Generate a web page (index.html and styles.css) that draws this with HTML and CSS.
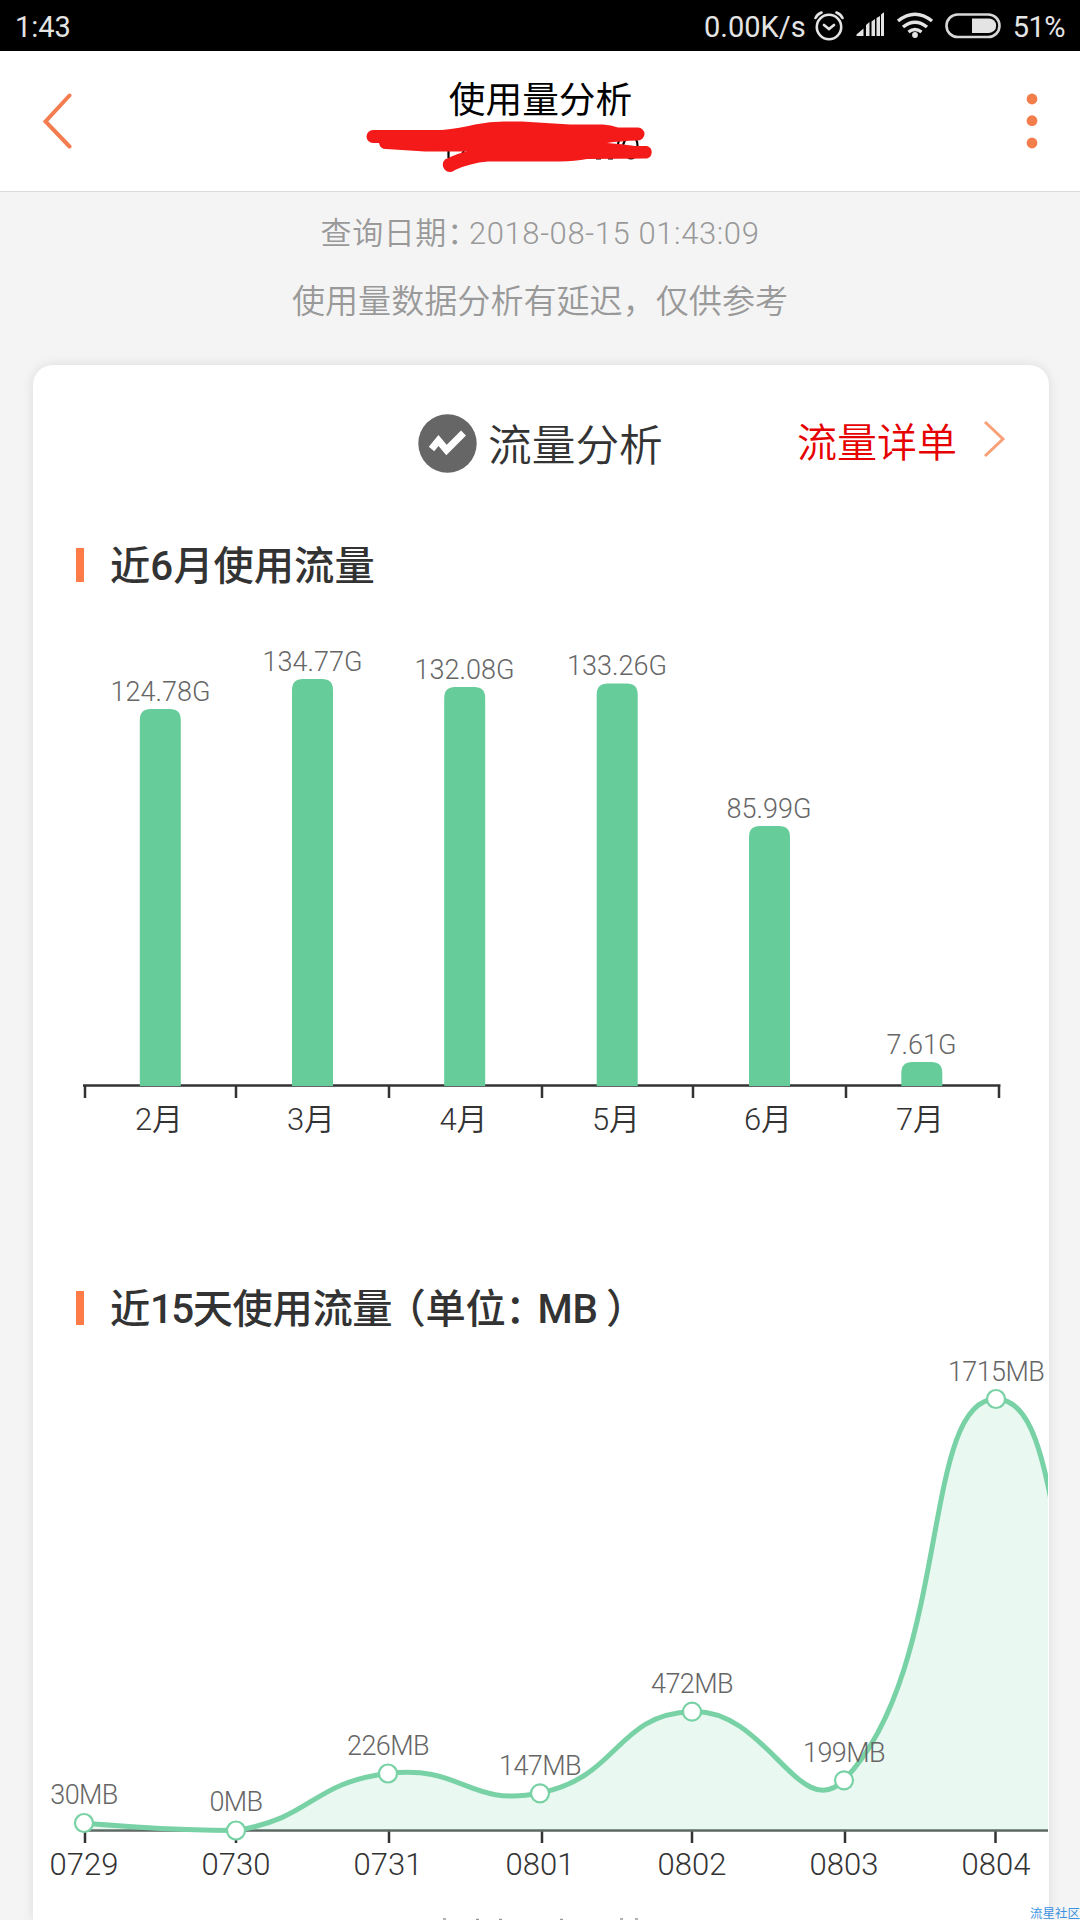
FILE: index.html
```html
<!DOCTYPE html>
<html lang="zh-CN">
<head>
  <meta charset="UTF-8" />
  <meta name="viewport" content="width=device-width, initial-scale=1.0"/>
  <title>使用量分析</title>
  <link rel="stylesheet" href="styles.css">
</head>
<body>

<div class="status-bar">
  <span class="clock">1:43</span>
  <span class="speed">0.00K/s</span>
  <svg class="status-icons" width="190" height="51" viewBox="814 0 190 51">
    <!-- alarm -->
    <g fill="none" stroke="#e4e4e4" stroke-width="2.6" stroke-linecap="round">
      <circle cx="829" cy="27" r="12.2"/>
      <path d="M824 25l5 4 5-4M815.5 18q2-4 6-5.500M842.500 18q-2-4-6-5.500"/>
    </g>
    <!-- signal -->
    <path fill="#e4e4e4" d="M856.500 36v-1.500l7-6V36zM866 36V25l3.500-3v14zM871.500 36V21.500l3.500-2.500v17zM876.500 36V18l3.500-2v20zM881 36V14.500l2.500-2h.5V36z"/>
    <!-- wifi -->
    <g fill="none" stroke="#e4e4e4" stroke-width="3.400">
      <path d="M898 21q17-13.500 34 0M903 27q12-9.500 24 0M908.500 32q6.500-5 13 0"/>
    </g>
    <circle cx="915" cy="35" r="2.900" fill="#e4e4e4"/>
    <!-- battery -->
    <rect x="946.500" y="14.500" width="53" height="22.500" rx="11.200" fill="none" stroke="#d8d8d8" stroke-width="2.600"/>
    <path fill="#e4e4e4" d="M972 18.500h17a7.200 7.200 0 0 1 0 14.400h-17z"/>
  </svg>
  <span class="percent">51%</span>
</div>

<div class="header">
  <svg class="back" width="30" height="58" viewBox="43 92 30 58">
    <path d="M69.500 95.500L45.500 121.500 69.500 146.500" fill="none" stroke="#f47d50" stroke-width="4" stroke-linecap="round"/>
  </svg>
  <h1>使用量分析</h1>
  <svg class="more" width="12" height="60" viewBox="1025.500 91 12 60">
    <g fill="#f47d4c">
      <circle cx="1031.500" cy="99" r="5.400"/>
      <circle cx="1031.500" cy="120.700" r="5.400"/>
      <circle cx="1031.500" cy="143" r="5.400"/>
    </g>
  </svg>
  <svg class="scribble" width="300" height="65" viewBox="360 110 300 65">
    <path d="M448.500 149v9M464 151l-2 3M619 140l-1 4M625 140l-2 5M636 139q1.500 3 1.500 7M596 158.500h5M608 158.500h5M628 158q4 1 6-.5" fill="none" stroke="#000" stroke-width="2.200"/>
    <path fill="#f41a1a" d="M373 130L442 130Q460 128 475 124.500 490 121.500 504 121.500H522L570 124.500H603Q611 125 618 127.500H638A6.500 6.500 0 0 1 638 140.500Q620 141 607 143Q622 144 635 146H647A6.500 6.500 0 0 1 647 158.500L587 159Q575 161 560 161.500H488Q470 163 455 170A6.800 6.800 0 0 1 445 159.500Q458 153 467 151.500L425 151.500 386 149Q380 149 379 143H373A6.500 6.500 0 0 1 373 130Z"/>
  </svg>
</div>

<div class="tips">
  <p class="date">查询日期<span class="colon">：</span>2018-08-15 01:43:09</p>
  <p class="note">使用量数据分析有延迟，仅供参考</p>
</div>

<div class="card">
  <div class="card-head">
    <svg width="59" height="59" viewBox="418 413.500 59 59">
      <circle cx="447.500" cy="443" r="29.200" fill="#666"/>
      <path d="M431.500 448.500l7-8.500 8 9.500 17-17" fill="none" stroke="#fff" stroke-width="7"/>
    </svg>
    <span class="card-title">流量分析</span>
    <a class="detail">流量详单</a>
    <svg class="arrow" width="24" height="40" viewBox="982 419 24 40">
      <path d="M985 422l18 17-18 17" fill="none" stroke="#f8a078" stroke-width="3"/>
    </svg>
  </div>

  <h2><span class="label">近6月使用流量</span></h2>

  <svg class="month-chart" width="1015" height="560" viewBox="33 600 1015 560">
    <path class="axis" d="M83 1085.500H1000.500M85 1085.500V1098M236 1085.500V1098M389 1085.500V1098M542 1085.500V1098M693 1085.500V1098M846 1085.500V1098M999 1085.500V1098"/>
    <g class="bars">
      <path d="M139.800 1086V720q0-11 11-11h19q11 0 11 11v366z"/>
      <path d="M292 1086V690q0-11 11-11h19q11 0 11 11v396z"/>
      <path d="M444.200 1086V698q0-11 11-11h19q11 0 11 11v388z"/>
      <path d="M596.700 1086V694.500q0-11 11-11h19q11 0 11 11v391.500z"/>
      <path d="M749 1086V837q0-11 11-11h19q11 0 11 11v249z"/>
      <path d="M901.300 1086V1073q0-11 11-11h19q11 0 11 11v13z"/>
    </g>
    <g class="value">
      <text x="160.500" y="701">124.78G</text>
      <text x="312.500" y="671">134.77G</text>
      <text x="464.500" y="679">132.08G</text>
      <text x="617" y="675">133.26G</text>
      <text x="769" y="818">85.99G</text>
      <text x="921.500" y="1054">7.61G</text>
    </g>
    <g class="name">
      <text x="159" y="1130">2月</text>
      <text x="311" y="1130">3月</text>
      <text x="463.500" y="1130">4月</text>
      <text x="616" y="1130">5月</text>
      <text x="768" y="1130">6月</text>
      <text x="920" y="1130">7月</text>
    </g>
  </svg>

  <h2><span class="label long">近<span class="days">15</span>天使用流<span class="tight">量</span>（单位<span class="unit">：</span>M<span class="loose">B</span>）</span></h2>

  <svg class="day-chart" width="1015" height="509" viewBox="33 1340 1015 509">
    <path class="axis base" d="M83 1830.500H1048"/>
    <path class="axis" d="M85 1831.500V1843M236 1831.500V1843M389 1831.500V1843M542 1831.500V1843M692 1831.500V1843M845 1831.500V1843M995.500 1831.500V1843"/>
    <path class="area" d="M84 1823C84 1823 162.400 1830.500 236 1830.500C314.400 1817.700 309.900 1783.100 388 1773.500C461.900 1764.400 468.600 1807.600 540 1793C620.600 1776.600 614.800 1714.800 692 1711.500C766.800 1708.300 800 1825 844 1780C952 1669 920 1399 996 1399C1072 1399 1040 1669 1148 1780V1830.500H84Z"/>
    <path class="line" d="M84 1823C84 1823 162.400 1830.500 236 1830.500C314.400 1817.700 309.900 1783.100 388 1773.500C461.900 1764.400 468.600 1807.600 540 1793C620.600 1776.600 614.800 1714.800 692 1711.500C766.800 1708.300 800 1825 844 1780C952 1669 920 1399 996 1399C1072 1399 1040 1669 1148 1780"/>
    <g class="dots">
      <circle cx="84" cy="1823" r="9"/>
      <circle cx="236" cy="1830.500" r="9"/>
      <circle cx="388" cy="1773.500" r="9"/>
      <circle cx="540" cy="1793.300" r="9"/>
      <circle cx="692" cy="1711.700" r="9"/>
      <circle cx="844" cy="1780.300" r="9"/>
      <circle cx="996" cy="1399" r="9"/>
    </g>
    <g class="value mb">
      <text x="84" y="1804">30MB</text>
      <text x="236" y="1811">0MB</text>
      <text x="388" y="1755">226MB</text>
      <text x="540" y="1775">147MB</text>
      <text x="692" y="1693">472MB</text>
      <text x="844" y="1762">199MB</text>
      <text x="996" y="1381">1715MB</text>
    </g>
  </svg>
  <div class="days-axis">
    <span>0729</span>
    <span>0730</span>
    <span>0731</span>
    <span>0801</span>
    <span>0802</span>
    <span>0803</span>
    <span>0804</span>
  </div>
  <!-- tops of the next line, cut by the screen edge -->
  <svg width="1015" height="3" viewBox="33 1917 1015 3">
    <path d="M443 1919h3M476 1919.500h3M499 1919.500h3M560 1919.500h3M620 1919h3M635 1919h3" stroke="#999" stroke-width="1.500"/>
  </svg>
</div>

<div class="watermark">流星社区</div>

</body>
</html>
```
FILE: styles.css
```css
* {
  box-sizing: border-box;
}

body {
  margin: 0;
  position: relative;
  width: 1080px;
  height: 1920px;
  overflow: hidden;
  background: #f4f4f4;
  font-family: Roboto, "Noto Sans CJK SC", sans-serif;
  font-weight: 350;
  color: #333;
}

h1, h2, p {
  margin: 0;
}

svg {
  display: block;
}

/* 状态栏 */
.status-bar {
  height: 51px;
  background: #000;
  color: #e4e4e4;
  display: flex;
  align-items: center;
  padding: 2px 15px 0 15px;
  font-size: 29px;
  font-weight: 400;
}

.status-icons {
  margin: -2px 9px 0 8px;
}

.speed {
  margin-left: auto;
}

.percent {
  letter-spacing: -0.5px;
}

/* 标题栏 */
.header {
  position: relative;
  height: 141px;
  padding: 0 42px 0 43px;
  background: #fff;
  border-bottom: 1px solid #dcdcdc;
  display: grid;
  grid-template-columns: 30px 1fr 30px;
  align-items: center;
}

.more {
  justify-self: end;
}

h1 {
  font-size: 36.7px;
  line-height: 48px;
  font-weight: 400;
  text-align: center;
  color: #000;
  margin-bottom: 41px;
}

.scribble {
  position: absolute;
  left: 360px;
  top: 59px;
}

/* 查询提示 */
.tips {
  height: 173px;
  padding-top: 18px;
  text-align: center;
  color: #999;
}

.date {
  font-size: 31px;
  line-height: 48px;
  letter-spacing: 0.6px;
}

.date .colon {
  letter-spacing: -9px;
}

.note {
  font-size: 33.1px;
  line-height: 50px;
  margin-top: 19px;
}

.card {
  width: 1016px;
  height: 1555px;
  margin-left: 33px;
  background: #fff;
  border-radius: 20px 20px 0 0;
  box-shadow: 0 0 12px rgba(0,0,0,0.1);
  overflow: hidden;
}

.card-head {
  height: 156px;
  display: flex;
  align-items: center;
  padding-left: 385px;
}

.card-title {
  font-size: 43.7px;
  margin-left: 11px;
  margin-bottom: 2px;
}

.detail {
  font-size: 40px;
  color: #e60000;
  margin-left: auto;
  margin-bottom: 6px;
}

.arrow {
  margin: 0 43px 8px 25px;
}

h2 {
  display: flex;
  align-items: center;
  height: 60px;
  padding-left: 43px;
  font-size: 40.3px;
  font-weight: 500;
}

h2::before {
  content: "";
  width: 8px;
  height: 34px;
  margin-right: 26px;
  background: #ff7b47;
}

.label {
  margin-bottom: 6px;
  white-space: nowrap;
}

.long {
  letter-spacing: -0.4px;
}

.days {
  letter-spacing: -1.5px;
}

.tight {
  letter-spacing: -7px;
}

.unit {
  letter-spacing: -8px;
}

.loose {
  letter-spacing: 8px;
}

.card-head + h2 {
  margin-top: 14px;
}

.month-chart {
  margin-top: 5px;
}

.month-chart + h2 {
  margin-top: 118px;
}

.day-chart {
  margin-top: 2px;
}

/* 图表 */
.axis {
  fill: none;
  stroke: #333;
  stroke-width: 2.5;
}

.base {
  stroke: #5c6460;
}

.bars {
  fill: #66cc99;
}

.area {
  fill: #66cc99;
  fill-opacity: 0.14;
}

.line {
  fill: none;
  stroke: #79d2a6;
  stroke-width: 5;
}

.dots {
  fill: #fff;
  stroke: #79d2a6;
  stroke-width: 2.2;
}

.value {
  font-size: 27px;
  fill: #666;
  text-anchor: middle;
}

.mb {
  letter-spacing: -0.6px;
}

.name {
  font-size: 31px;
  fill: #333;
  text-anchor: middle;
}

.days-axis {
  display: grid;
  grid-template-columns: repeat(7, 152px);
  height: 68px;
  margin-left: -25px;
  font-size: 31px;
  line-height: 31px;
  text-align: center;
}

.watermark {
  position: absolute;
  left: 1030px;
  top: 1906px;
  font-size: 12.5px;
  line-height: 15px;
  font-weight: 400;
  white-space: nowrap;
  color: #3b92e0;
}
```
